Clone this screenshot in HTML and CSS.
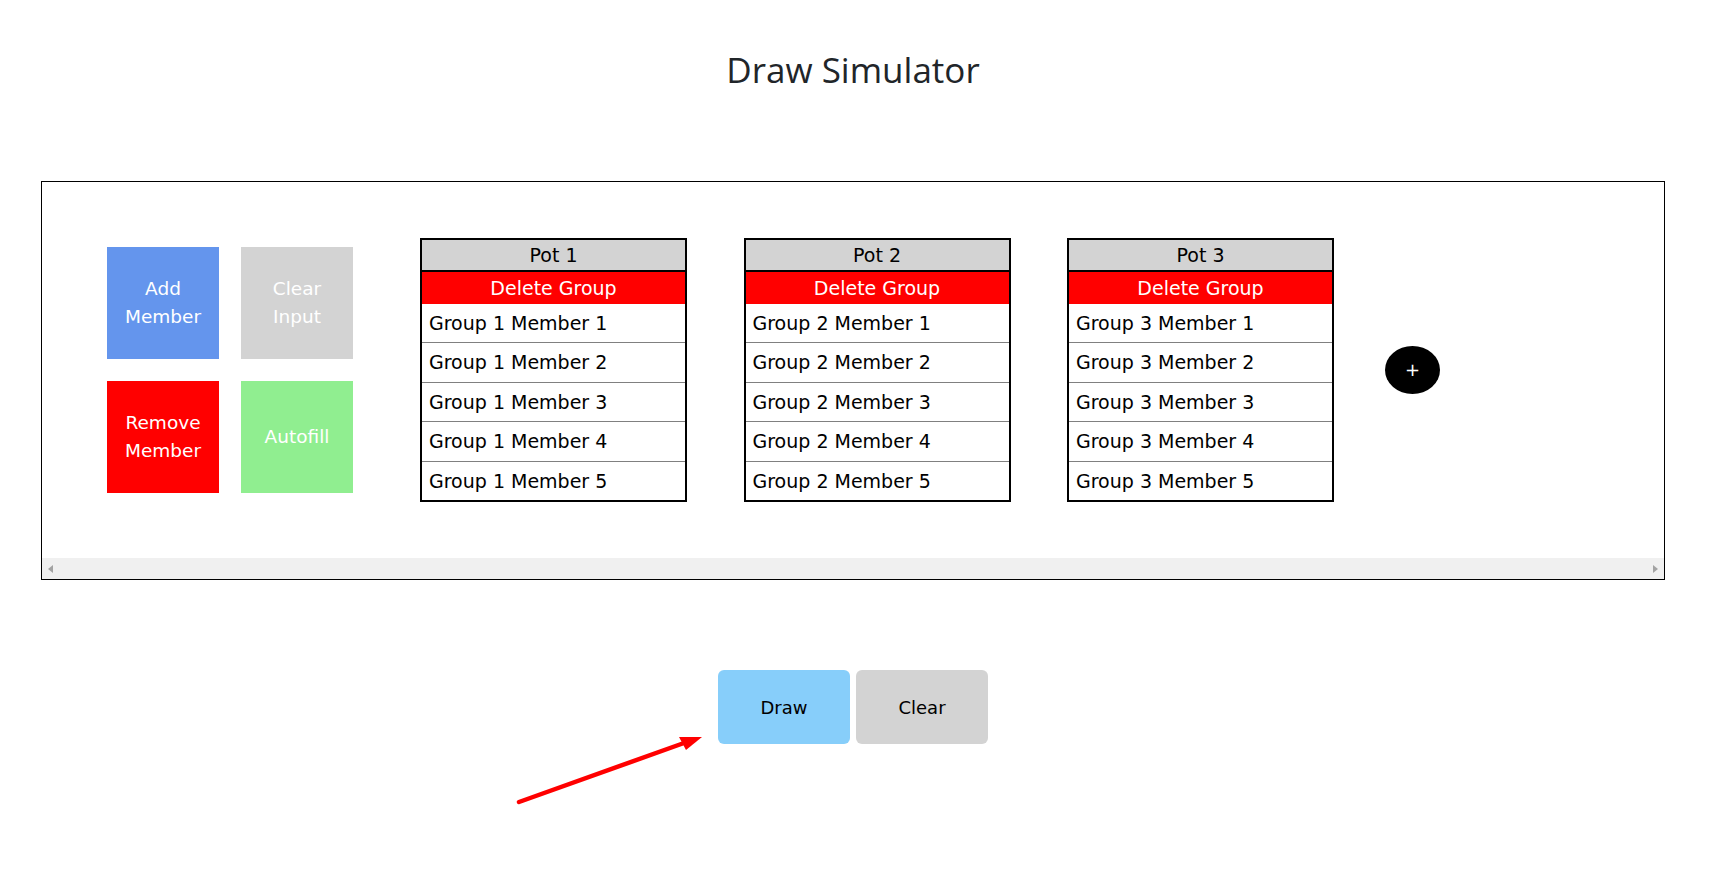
FILE: index.html
```html
<!DOCTYPE html>
<html>
<head>
<meta charset="utf-8">
<title>Draw Simulator</title>
<link rel="stylesheet" href="styles.css">
</head>
<body>
<div class="page">
  <h1 class="title">Draw Simulator</h1>
  <div class="frame">
    <div class="board">
      <div class="controls">
        <div class="ctl ctl-add">Add<br>Member</div>
        <div class="ctl ctl-clear">Clear<br>Input</div>
        <div class="ctl ctl-remove">Remove<br>Member</div>
        <div class="ctl ctl-autofill">Autofill</div>
      </div>
      <div class="pots">
        <div class="pot">
          <div class="pot-head">Pot 1</div>
          <div class="pot-del">Delete Group</div>
          <div class="pot-row">Group 1 Member 1</div>
          <div class="pot-row">Group 1 Member 2</div>
          <div class="pot-row">Group 1 Member 3</div>
          <div class="pot-row">Group 1 Member 4</div>
          <div class="pot-row">Group 1 Member 5</div>
        </div>
        <div class="pot">
          <div class="pot-head">Pot 2</div>
          <div class="pot-del">Delete Group</div>
          <div class="pot-row">Group 2 Member 1</div>
          <div class="pot-row">Group 2 Member 2</div>
          <div class="pot-row">Group 2 Member 3</div>
          <div class="pot-row">Group 2 Member 4</div>
          <div class="pot-row">Group 2 Member 5</div>
        </div>
        <div class="pot">
          <div class="pot-head">Pot 3</div>
          <div class="pot-del">Delete Group</div>
          <div class="pot-row">Group 3 Member 1</div>
          <div class="pot-row">Group 3 Member 2</div>
          <div class="pot-row">Group 3 Member 3</div>
          <div class="pot-row">Group 3 Member 4</div>
          <div class="pot-row">Group 3 Member 5</div>
        </div>
      </div>
      <div class="add-pot">+</div>
    </div>
    <div class="hscroll">
      <span class="arrow-left"></span>
      <span class="arrow-right"></span>
    </div>
  </div>
  <div class="actions">
    <div class="btn btn-draw">Draw</div>
    <div class="btn btn-clear">Clear</div>
  </div>
</div>
<svg class="annotation" width="1733" height="876" viewBox="0 0 1733 876">
  <line x1="519" y1="802" x2="684" y2="743" stroke="#ff0000" stroke-width="4.5" stroke-linecap="round"/>
  <polygon points="702,737 679,737 686,750" fill="#ff0000"/>
</svg>
</body>
</html>
```
FILE: styles.css
```css
html, body {
  margin: 0;
  padding: 0;
  background: #ffffff;
}
body {
  font-family: "DejaVu Sans", Verdana, sans-serif;
  font-size: 18px;
  color: #000;
  position: relative;
  min-height: 876px;
}
.page {
  width: 1624px;
  margin-left: 41px;
}
.title {
  margin: 0;
  padding-top: 46px;
  height: 181px;
  box-sizing: border-box;
  text-align: center;
  font-family: "Open Sans", "Noto Sans", sans-serif;
  font-weight: 400;
  font-size: 35px;
  line-height: 48px;
  color: #212529;
}
.frame {
  border: 1px solid #000;
}
.board {
  display: flex;
  align-items: center;
  height: 376px;
  padding-left: 65px;
}
.controls {
  display: grid;
  grid-template-columns: 112px 112px;
  grid-auto-rows: 112px;
  gap: 22px;
}
.ctl {
  display: flex;
  align-items: center;
  justify-content: center;
  text-align: center;
  color: #fff;
  font-size: 18.5px;
  line-height: 28px;
}
.ctl-add { background: #6495ed; }
.ctl-clear { background: #d3d3d3; }
.ctl-remove { background: #ff0000; }
.ctl-autofill { background: #90ee90; }
.pots {
  display: flex;
  gap: 56.5px;
  margin-left: 67px;
  font-size: 19px;
}
.pot {
  width: 267px;
  box-sizing: border-box;
  border: 2px solid #000;
}
.pot-head {
  height: 30px;
  line-height: 31px;
  background: #d3d3d3;
  text-align: center;
  border-bottom: 2px solid #000;
}
.pot-del {
  height: 32px;
  line-height: 32px;
  background: #ff0000;
  color: #fff;
  text-align: center;
}
.pot-row {
  height: 38.6px;
  line-height: 38.6px;
  padding-left: 7px;
  border-top: 1px solid #808080;
}
.pot-del + .pot-row {
  border-top: none;
}
.add-pot {
  margin-left: 51px;
  width: 55px;
  height: 48px;
  border-radius: 50%;
  background: #000;
  color: #fff;
  display: flex;
  align-items: center;
  justify-content: center;
  font-size: 18px;
  line-height: 1;
}
.hscroll {
  height: 21px;
  background: #f0f0f0;
  display: flex;
  align-items: center;
  justify-content: space-between;
  padding: 0 6px;
}
.arrow-left {
  width: 0;
  height: 0;
  border-top: 4px solid transparent;
  border-bottom: 4px solid transparent;
  border-right: 5px solid #a3a3a3;
}
.arrow-right {
  width: 0;
  height: 0;
  border-top: 4px solid transparent;
  border-bottom: 4px solid transparent;
  border-left: 5px solid #a3a3a3;
}
.actions {
  display: flex;
  justify-content: center;
  gap: 6px;
  margin-top: 90px;
}
.btn {
  width: 132px;
  height: 74px;
  border-radius: 6px;
  display: flex;
  align-items: center;
  justify-content: center;
  color: #000;
}
.btn-draw { background: #87cefa; }
.btn-clear { background: #d3d3d3; }
.annotation {
  position: absolute;
  left: 0;
  top: 0;
  pointer-events: none;
}
```
